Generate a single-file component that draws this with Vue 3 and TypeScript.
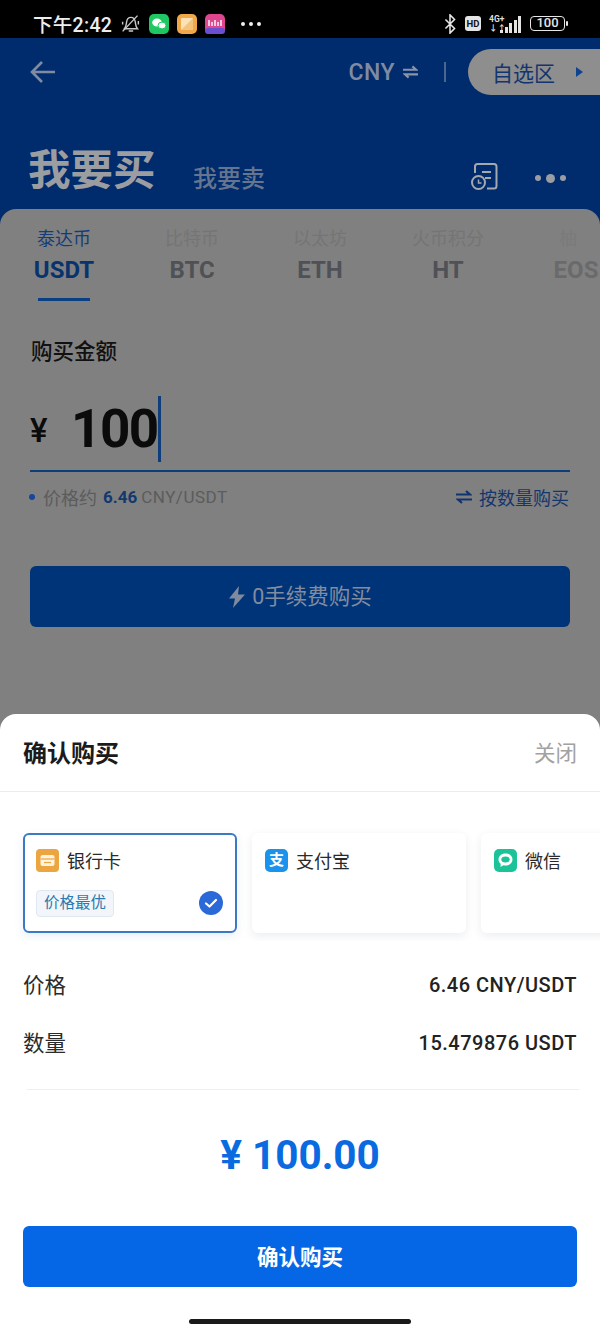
<script setup lang="ts">
const tabs = [
  { label: '泰达币', code: 'USDT', active: true },
  { label: '比特币', code: 'BTC', active: false },
  { label: '以太坊', code: 'ETH', active: false },
  { label: '火币积分', code: 'HT', active: false },
  { label: '柚', code: 'EOS', active: false },
]
const rows = [
  { label: '价格', value: '6.46 CNY/USDT' },
  { label: '数量', value: '15.479876 USDT' },
]
</script>

<template>
  <div class="page">
    <div class="status">
      <div class="status-left">
        <span class="time">下午2:42</span>
        <svg class="bell" width="21" height="21" viewBox="0 0 24 24" fill="none" stroke="#c9c9c9" stroke-width="1.600">
          <path d="M5 18c2-2 2-4 2.500-7.500C8 7 10 5 12.500 5S17 7 17.500 10.500 18 16 20 18Z" />
          <path d="M10 20.500h5M3 21 20 3M21 9v4M3 10v3" />
        </svg>
        <svg class="app" width="20" height="20" viewBox="0 0 20 20">
          <rect width="20" height="20" rx="5" fill="#1fc763" />
          <ellipse cx="8" cy="8.500" rx="4.800" ry="4" fill="#fff" />
          <ellipse cx="13" cy="11.500" rx="4" ry="3.400" fill="#fff" stroke="#1fc763" />
        </svg>
        <svg class="app" width="20" height="20" viewBox="0 0 20 20">
          <rect width="20" height="20" rx="5" fill="#f2a748" />
          <rect x="4" y="4" width="12" height="12" rx="1" fill="#fbe2b8" />
          <path d="M4 16 16 4v12Z" fill="#f6c37c" />
        </svg>
        <svg class="app" width="20" height="20" viewBox="0 0 20 20">
          <rect width="20" height="20" rx="5" fill="#e0468f" />
          <rect y="14" width="20" height="6" rx="3" fill="#6a4fd0" />
          <path d="M4 6v6M7 8v4M10 6v6M13 8v4M16 6v6" stroke="#fff" stroke-width="1.400" />
        </svg>
        <span class="dots"><i></i><i></i><i></i></span>
      </div>
      <div class="status-right">
        <svg width="14" height="20" viewBox="0 0 14 22" fill="none" stroke="#e8e8e8" stroke-width="1.700">
          <path d="M2 6l10 10-5 5V1l5 5L2 16" />
        </svg>
        <span class="hd">HD</span>
        <span class="net">
          <span class="net-text"><b>4G+</b><b>↓↑</b></span>
          <span class="bars"><i style="height: 3px"></i><i style="height: 6px"></i><i style="height: 10px"></i><i style="height: 13px"></i><i style="height: 17px"></i></span>
        </span>
        <span class="battery"><span class="battery-body">100</span><span class="battery-tip"></span></span>
      </div>
    </div>

    <header class="header">
      <div class="top-row">
        <svg width="26" height="24" viewBox="0 0 26 24" fill="none" stroke="#7f8ba3" stroke-width="2.600">
          <path d="M25 12H2M12 2 2 12l10 10" />
        </svg>
        <div class="top-right">
          <span class="cny">CNY</span>
          <svg width="15" height="14" viewBox="0 0 16 14" fill="none" stroke="#8a94a8" stroke-width="2.200">
            <path d="M0 4.500h14L10 1M16 9.500H2L6 13" />
          </svg>
          <span class="sep"></span>
          <div class="pill">
            <span>自选区</span>
            <i class="pill-arrow"></i>
          </div>
        </div>
      </div>
      <div class="title-row">
        <span class="buy">我要买</span>
        <span class="sell">我要卖</span>
        <svg class="orders" width="28" height="30" viewBox="0 0 28 30" fill="none" stroke="#a5a8ad" stroke-width="2">
          <path d="M5 11V4.500C5 3 6 2 7.500 2H24c1.500 0 2.500 1 2.500 2.500V24c0 1.500-1 2.500-2.500 2.500h-7" />
          <path d="M12 10h9M15 16h6" />
          <circle cx="8.500" cy="20.500" r="6.500" />
          <path d="M8.500 17.500v3.500h3" stroke-width="1.500" />
        </svg>
        <span class="more"><i></i><i class="mid"></i><i></i></span>
      </div>
    </header>

    <main class="panel">
      <div class="tabs">
        <div v-for="t in tabs" :key="t.code" class="tab" :class="{ on: t.active }">
          <span class="tab-label">{{ t.label }}</span>
          <span class="tab-code">{{ t.code }}</span>
          <i v-if="t.active" class="tab-line"></i>
        </div>
      </div>
      <div class="form">
        <div class="amount-title">购买金额</div>
        <div class="amount">
          <span class="yen">¥</span>
          <span class="num">100</span>
          <i class="caret"></i>
        </div>
        <div class="info">
          <span class="info-l">
            <i class="bullet"></i>
            <span>价格约</span>
            <b>6.46</b>
            <span class="latin">CNY/USDT</span>
          </span>
          <span class="info-r">
            <svg width="16" height="14" viewBox="0 0 16 14" fill="none" stroke="#10346f" stroke-width="2.200">
              <path d="M0 4.500h14L10 1M16 9.500H2L6 13" />
            </svg>
            <span>按数量购买</span>
          </span>
        </div>
        <div class="dim-btn">
          <svg width="18" height="22" viewBox="0 0 18 22">
            <path d="M11 0 1 12.500h6L5 22 17 8.500h-7Z" fill="#7f8a9d" />
          </svg>
          <span>0手续费购买</span>
        </div>
      </div>
    </main>

    <div class="sheet-wrap">
      <section class="sheet">
        <div class="sheet-head">
          <span class="sheet-title">确认购买</span>
          <span class="close">关闭</span>
        </div>
        <div class="cards">
          <div class="card selected">
            <div class="card-top">
              <svg width="23" height="23" viewBox="0 0 23 23">
                <rect width="23" height="23" rx="4" fill="#eca53f" />
                <rect x="4.500" y="6" width="14" height="11" rx="2" fill="#fdf3e0" />
                <path d="M4.500 10h14" stroke="#eca53f" stroke-width="1.200" />
                <path d="M8 13.500h7" stroke="#eca53f" stroke-width="1.200" />
              </svg>
              <span class="card-name">银行卡</span>
            </div>
            <div class="card-bottom">
              <span class="tag">价格最优</span>
              <svg width="24" height="24" viewBox="0 0 24 24">
                <circle cx="12" cy="12" r="12" fill="#2c69d8" />
                <path d="M7 12.500l3.500 3L17 9" fill="none" stroke="#fff" stroke-width="2.200" stroke-linecap="round" stroke-linejoin="round" />
              </svg>
            </div>
          </div>
          <div class="card">
            <div class="card-top">
              <span class="ali">支</span>
              <span class="card-name">支付宝</span>
            </div>
          </div>
          <div class="card">
            <div class="card-top">
              <svg width="23" height="23" viewBox="0 0 23 23">
                <rect width="23" height="23" rx="5" fill="#1cc398" />
                <path d="M11.500 4.500c4.200 0 7 2.700 7 6s-2.800 6-7 6c-.8 0-1.500-.1-2.200-.3L6.500 18l.2-3.200c-1.400-1-2.200-2.600-2.200-4.300 0-3.300 2.800-6 7-6Z" fill="#fff" />
                <ellipse cx="11.500" cy="10.500" rx="4.200" ry="3" fill="#1cc398" />
              </svg>
              <span class="card-name">微信</span>
            </div>
          </div>
        </div>
        <div class="rows">
          <div v-for="r in rows" :key="r.label" class="row">
            <span class="row-label">{{ r.label }}</span>
            <span class="row-value">{{ r.value }}</span>
          </div>
        </div>
        <div class="divider"></div>
        <div class="total">¥ 100.00</div>
        <div class="confirm">确认购买</div>
        <div class="home"><i></i></div>
      </section>
    </div>
  </div>
</template>

<style>
html, body { margin: 0; padding: 0; background: #808080; }
</style>

<style scoped>
.page {
  width: 600px;
  height: 1334px;
  overflow: hidden;
  display: flex;
  flex-direction: column;
  background: #002b6c;
  font-family: Roboto, "Noto Sans CJK SC", sans-serif;
}
.status {
  height: 38px;
  background: #000;
  display: flex;
  justify-content: space-between;
  align-items: center;
  padding: 9px 32px 0 33px;
  flex: none;
  box-sizing: border-box;
}
.status-left, .status-right { display: flex; align-items: center; }
.time { color: #ededed; font-size: 19.500px; font-weight: 500; letter-spacing: 0.3px; margin-right: 8px; }
.bell { margin-right: 8px; }
.app { margin-right: 8px; }
.dots { display: flex; gap: 4px; margin-left: 8px; }
.dots i { width: 4px; height: 4px; border-radius: 50%; background: #eee; }
.status-right { gap: 8px; }
.hd {
  width: 16px; height: 15px; border-radius: 3px; background: #e4e4e4; color: #111;
  font-size: 9.500px; font-weight: 700; text-align: center; line-height: 15px;
}
.net { display: flex; align-items: flex-end; gap: 2px; height: 18px; }
.net-text { display: flex; flex-direction: column; width: 9px; color: #ddd; font-size: 8.500px; line-height: 9px; white-space: nowrap; }
.net-text b { font-weight: 700; }
.bars { display: flex; align-items: flex-end; gap: 1.500px; }
.bars i { width: 3px; background: #e4e4e4; }
.battery { display: flex; align-items: center; margin-left: 1px; }
.battery-body {
  width: 35px; height: 15px; box-sizing: border-box; border: 1.500px solid #e6e6e6; border-radius: 4px; color: #e6e6e6;
  font-size: 13px; font-weight: 500; text-align: center; line-height: 12px;
}
.battery-tip { width: 2px; height: 5px; background: #e6e6e6; margin-left: 1px; border-radius: 1px; }

.header { height: 171px; background: #002b6c; flex: none; box-sizing: border-box; padding-top: 11px; }
.top-row { height: 46px; display: flex; justify-content: space-between; align-items: center; padding-left: 30px; }
.top-right { display: flex; align-items: center; }
.cny { color: #7f8ba3; font-size: 23px; font-weight: 500; letter-spacing: 0.5px; margin-right: 8px; }
.sep { width: 2px; height: 20px; background: #4a678f; margin: 0 22px 0 26px; }
.pill {
  width: 132px; height: 46px; background: #8e8e8e; border-radius: 23px 0 0 23px; display: flex; align-items: center;
  padding-left: 24px; box-sizing: border-box; color: #12356f; font-size: 21px;
}
.pill-arrow {
  width: 0; height: 0; margin-left: 21px;
  border-left: 7px solid #10438f; border-top: 5px solid transparent; border-bottom: 5px solid transparent;
}
.title-row { display: flex; align-items: center; height: 70px; margin-top: 41px; padding-left: 28px; }
.buy { color: #9b9da1; font-size: 42.500px; font-weight: 700; line-height: 48px; width: 165px; }
.sell { color: #66758f; font-size: 24px; font-weight: 500; margin-top: 10px; }
.orders { margin-left: 205px; margin-top: 12px; }
.more { display: flex; align-items: center; gap: 5px; margin-left: 37px; margin-top: 14px; }
.more i { width: 6px; height: 6px; border-radius: 50%; background: #9a9da3; }
.more i.mid { width: 9px; height: 9px; }

.panel {
  height: 505px; flex: none; background: #808080; border-radius: 16px 16px 0 0;
  box-sizing: border-box; overflow: hidden;
}
.tabs { display: flex; height: 92px; }
.tab {
  width: 128px; flex: none; display: flex; flex-direction: column; align-items: center; position: relative;
  box-sizing: border-box;
}
.tab-label { font-size: 18px; line-height: 26px; margin-top: 17px; color: #757575; }
.tab-code { font-size: 24px; font-weight: 700; line-height: 32px; margin-top: 2px; color: #4f5156; }
.tab.on .tab-label { color: #153c79; }
.tab.on .tab-code { color: #08336f; }
.tab:last-child { opacity: 0.45; }
.tab:last-child .tab-label { margin-right: 16px; }
.tab-line { position: absolute; left: 38px; top: 89px; width: 52px; height: 3px; background: #0a3f82; }
.form { padding: 0 30px; }
.amount-title { color: #111; font-size: 21.500px; font-weight: 500; line-height: 28px; margin-top: 37px; margin-left: 1px; }
.amount {
  display: flex; align-items: center; height: 66px; margin-top: 30px; border-bottom: 2px solid #0d3d7d;
  padding-bottom: 8px;
}
.yen { font-size: 33px; color: #0b0b0b; font-weight: 500; width: 41px; margin-top: 2px; }
.num { font-size: 53px; font-weight: 700; color: #0b0b0b; line-height: 66px; letter-spacing: -1.500px; }
.caret { width: 3px; height: 66px; background: #0d3d7d; }
.info { display: flex; justify-content: space-between; align-items: center; margin-top: 11px; height: 28px; font-size: 17px; color: #5c5c5c; }
.info-l { display: flex; align-items: center; gap: 6px; margin-left: -1px; font-size: 18px; }
.bullet { width: 6px; height: 6px; background: #17479a; border-radius: 50%; margin-right: 2px; }
.info b { color: #12396f; font-weight: 700; font-size: 17px; }
.latin { letter-spacing: 0.5px; font-size: 17px; margin-left: -2px; }
.info-r { display: flex; align-items: center; gap: 7px; color: #14366e; font-size: 18px; margin-right: 1px; }
.dim-btn {
  height: 61px; margin-top: 55px; background: #003479; border-radius: 6px; display: flex; align-items: center;
  justify-content: center; gap: 6px; color: #828c9e; font-size: 21.500px; line-height: 28px;
}

.sheet-wrap { flex: 1; background: #808080; }
.sheet { height: 620px; background: #fff; border-radius: 16px 16px 0 0; overflow: hidden; display: flex; flex-direction: column; }
.sheet-head {
  height: 78px; flex: none; box-sizing: border-box; border-bottom: 1px solid #ececec; display: flex;
  justify-content: space-between; align-items: center; padding: 0 23px;
}
.sheet-title { font-size: 24px; font-weight: 700; color: #1b1b1b; margin-bottom: 2px; }
.close { font-size: 21.500px; color: #a2a2a2; margin-bottom: 2px; }
.cards { display: flex; gap: 15.500px; padding: 41px 0 8px 23px; height: 100px; flex: none; overflow: hidden; }
.card {
  width: 213.500px; height: 100px; flex: none; box-sizing: border-box; background: #fff; border-radius: 6px;
  box-shadow: 0 3px 10px rgba(30, 60, 110, 0.09); padding: 16px 13px 0;
}
.card.selected { border: 2px solid #3a79c4; padding: 14px 11px 0; box-shadow: 0 3px 10px rgba(30, 90, 170, 0.1); }
.card-top { display: flex; align-items: center; gap: 8px; font-size: 18px; color: #2a2a2a; height: 23px; }
.card-name { margin-top: -2px; }
.ali {
  width: 23px; height: 23px; border-radius: 5px; background: #1b92ec; color: #fff; font-size: 15px; font-weight: 700;
  text-align: center; line-height: 23px;
}
.card-bottom { display: flex; justify-content: space-between; align-items: center; margin-top: 16px; padding-right: 1px; }
.tag {
  height: 27px; width: 78px; box-sizing: border-box; border: 1px solid #dfe8f2; background: #f2f6fa; border-radius: 4px;
  color: #2d7ab2; font-size: 15.500px; text-align: center; line-height: 25px; margin-top: 2px;
}
.rows { margin-top: 14px; padding: 0 23px; flex: none; }
.row { height: 58px; display: flex; justify-content: space-between; align-items: center; }
.row-label { font-size: 21.500px; color: #2b2b2b; margin-bottom: 2px; }
.row-value { font-size: 20px; color: #222; font-weight: 500; letter-spacing: 0.5px; margin-top: 2px; }
.divider { height: 1px; background: #efefef; margin: 18px 21px 0 27px; flex: none; }
.total { text-align: center; color: #0a6ae0; font-size: 40.500px; font-weight: 700; line-height: 50px; margin-top: 40px; }
.confirm {
  height: 61px; margin: 46px 23px 0; background: #0566e6; border-radius: 6px; flex: none; color: #fff; font-size: 21.500px;
  font-weight: 700; display: flex; align-items: center; justify-content: center; padding-bottom: 2px; box-sizing: border-box;
}
.home { display: flex; justify-content: center; margin-top: 32px; }
.home i { width: 222px; height: 5px; background: #1a1a1a; border-radius: 3px; }
</style>
